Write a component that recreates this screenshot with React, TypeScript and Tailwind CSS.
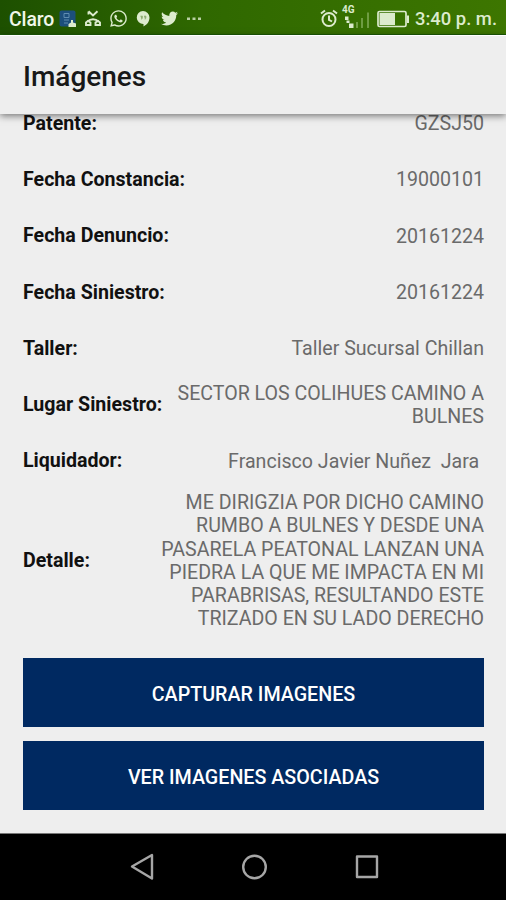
import { FaTwitter, FaWhatsapp } from "react-icons/fa";

const rows = [
  { label: "Patente:", value: "GZSJ50" },
  { label: "Fecha Constancia:", value: "19000101" },
  { label: "Fecha Denuncio:", value: "20161224" },
  { label: "Fecha Siniestro:", value: "20161224" },
  { label: "Taller:", value: "Taller Sucursal Chillan" },
  { label: "Lugar Siniestro:", value: "SECTOR LOS COLIHUES CAMINO A\nBULNES" },
  { label: "Liquidador:", value: "Francisco Javier Nuñez  Jara " },
  {
    label: "Detalle:",
    value:
      "ME DIRIGZIA POR DICHO CAMINO\nRUMBO A BULNES Y DESDE UNA\nPASARELA PEATONAL LANZAN UNA\nPIEDRA LA QUE ME IMPACTA EN MI\nPARABRISAS, RESULTANDO ESTE\nTRIZADO EN SU LADO DERECHO",
  },
];

const StatusBar = () => {
  return (
    <div className="flex h-[35px] shrink-0 items-center border-b border-[#1c5a06] bg-linear-to-r from-[#1d5000] via-[#2f6800] via-40% to-[#3d7600] pt-[3px] pr-[9px] pl-[9px] text-[#dcebcd]">
      <span className="w-[50px] pt-[2px] text-[19.4px] font-medium tracking-[-0.1px] text-[#f0f7ea]">
        Claro
      </span>
      <svg className="h-[18px] w-[18px]" viewBox="0 0 18 18">
        <rect x="0.5" y="0.5" width="16" height="16" rx="2" fill="#1c4f7c" />
        <path
          d="M5 3.500h5v4H5zM5 10h5M5 13h4"
          fill="none"
          stroke="#5f8db0"
          strokeWidth="1"
        />
        <path d="M12 10h2v2.500l3 1V17H9.500v-3l2.500-1.500z" fill="#dcebcd" />
      </svg>
      <svg
        className="ml-[7px] h-[18px] w-[18px]"
        viewBox="0 0 18 18"
        fill="none"
        stroke="currentColor"
        strokeWidth="1.900"
      >
        <path d="M4.500 1.200l4.500 4.300 4.500-4.300M4.500 4.500V1.500" />
        <path d="M3.500 11.500C6.500 8.500 11.500 8.500 14.500 11.500" />
        <path d="M2 12.500l2-1.500 2.500 1.500v2.500H2zM16 12.500l-2-1.500-2.500 1.500v2.500H16z" />
      </svg>
      <FaWhatsapp className="ml-[7px] h-[19px] w-[19px]" />
      <svg className="ml-[8px] h-[18px] w-[14px]" viewBox="0 0 14 18">
        <path
          d="M7 1a6.500 6.500 0 0 1 6.500 6.500C13.500 12 10.500 15 7.500 16.500V14A6.500 6.500 0 0 1 7 1z"
          fill="currentColor"
        />
        <path
          d="M4.500 6h2v2l-1 1.500M8 6h2v2L9 9.500"
          fill="#8fae72"
          stroke="#8fae72"
          strokeWidth="0.600"
        />
      </svg>
      <FaTwitter className="ml-[11px] h-[17px] w-[17px]" />
      <svg className="ml-[9px] h-[4px] w-[14px]" viewBox="0 0 14 4">
        <path
          d="M0 .5h3v2.500H0zM5.500 .5h3v2.500h-3zM11 .5h3v2.500h-3z"
          fill="currentColor"
          opacity="0.8"
        />
      </svg>
      <svg
        className="ml-auto h-[19px] w-[18px]"
        viewBox="0 0 18 19"
        fill="none"
        stroke="currentColor"
        strokeWidth="2"
      >
        <circle cx="9" cy="10.500" r="6.500" />
        <path d="M9 6.500v4.300l3 1.700M1 4.500l4-3M17 4.500l-4-3" />
      </svg>
      <div className="relative ml-[4px] h-[22px] w-[28px]">
        <span className="absolute top-[-3px] left-0 text-[10px] leading-[10px] font-bold">
          4G
        </span>
        <svg className="h-[22px] w-[28px]" viewBox="0 0 28 22">
          <path
            d="M3 8.500h3.500V12H3zM4.500 12.500h3v2.500h-3zM7 15.500h4.500V20H7z"
            fill="currentColor"
          />
          <path
            d="M14 14h2v6h-2zM19 10h2v10h-2zM25 4.500h2V20h-2z"
            fill="#6f9d42"
          />
        </svg>
      </div>
      <svg className="ml-[7px] h-[18px] w-[33px]" viewBox="0 0 33 18">
        <rect
          x="1"
          y="1.500"
          width="28"
          height="15"
          rx="1.500"
          fill="none"
          stroke="currentColor"
          strokeWidth="1.700"
        />
        <path d="M2.500 3h15.500v12H2.500z" fill="currentColor" />
        <path d="M30 5.500h2v7.500H30z" fill="currentColor" />
      </svg>
      <span className="ml-[5px] pt-[1px] text-[18.4px] font-medium whitespace-pre">
        3:40 p. m.
      </span>
    </div>
  );
};

const NavBar = () => {
  return (
    <div className="h-[67px] shrink-0 border-t border-[#777] bg-black">
      <svg
        className="h-[66px] w-[506px]"
        viewBox="0 0 506 66"
        fill="none"
        stroke="#a6a6a6"
        strokeWidth="2.400"
        strokeLinejoin="round"
      >
        <path d="M132 32.500L152 21v23.500z" />
        <circle cx="254.500" cy="33" r="11.300" />
        <rect x="357" y="22.500" width="20" height="20.500" />
      </svg>
    </div>
  );
};

const App = () => {
  return (
    <div className="flex h-[900px] w-[506px] flex-col overflow-hidden bg-[#eeeeee] font-['Roboto',sans-serif]">
      <StatusBar />
      <header className="z-10 flex h-[79px] shrink-0 items-center border-t border-white bg-[#eeeeee] pt-[4px] pl-[23px] shadow-[0_2px_7px_rgba(0,0,0,0.5)]">
        <h1 className="text-[28px] font-medium text-[#181818]">Imágenes</h1>
      </header>
      <main className="flex-1 pr-[22px] pl-[23px]">
        <div className="-mt-[18.5px]">
          {rows.map((row) => (
            <div
              key={row.label}
              className="flex min-h-[56.25px] items-center justify-between last:pt-[2px]"
            >
              <span className="text-[19.6px] font-bold text-[#111]">
                {row.label}
              </span>
              <span className="text-right text-[19.6px] leading-[23.2px] whitespace-pre text-[#6a6a6a]">
                {row.value}
              </span>
            </div>
          ))}
        </div>
        <div className="mt-[28px] flex flex-col gap-[14px] text-[19.7px] font-medium text-white">
          <button className="h-[69px] bg-[#002961] pt-[3px]">
            CAPTURAR IMAGENES
          </button>
          <button className="h-[69px] bg-[#002961] pt-[3px]">
            VER IMAGENES ASOCIADAS
          </button>
        </div>
      </main>
      <NavBar />
    </div>
  );
};

export default App;
